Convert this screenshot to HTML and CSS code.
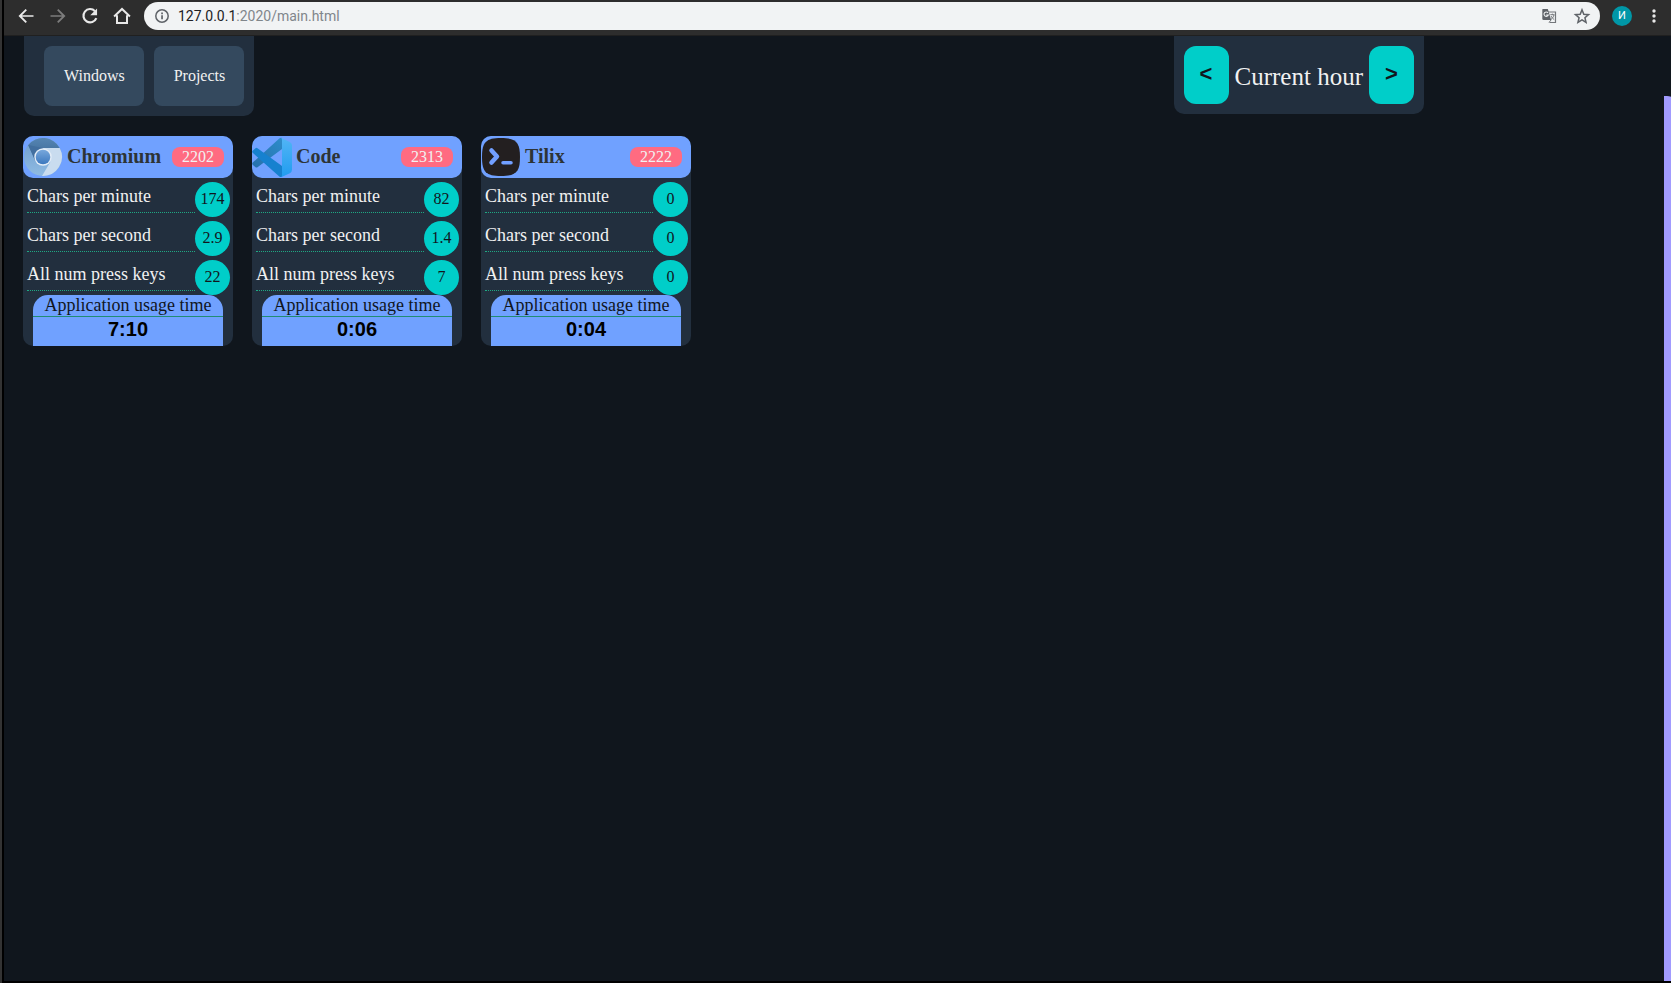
FILE: index.html
```
<!DOCTYPE html>
<html lang="en">
<head>
<meta charset="utf-8">
<title>Key statistics</title>
<link rel="stylesheet" href="styles.css">
</head>
<body>
<header class="browser">
  <button class="tool" aria-label="Back"><svg viewBox="0 0 24 24" width="20" height="20"><path d="M21 11H7.200l5.900-5.900L11.500 3.500 3 12l8.500 8.500 1.600-1.600L7.200 13H21z" fill="#e8e8e8"/></svg></button>
  <button class="tool" aria-label="Forward"><svg viewBox="0 0 24 24" width="20" height="20"><path d="M3 11h13.800l-5.900-5.900 1.600-1.600L21 12l-8.500 8.500-1.600-1.600 5.900-5.900H3z" fill="#7c7c7c"/></svg></button>
  <button class="tool" aria-label="Reload"><svg viewBox="0 0 24 24" width="20" height="20"><path d="M18 6.200A8 8 0 1 0 19.600 14.500" fill="none" stroke="#e8e8e8" stroke-width="2.600"/><path d="M20.500 3v8.200h-8.200z" fill="#e8e8e8"/></svg></button>
  <button class="tool" aria-label="Home"><svg viewBox="0 0 24 24" width="20" height="20"><path d="M2.500 12.500 12 3.500l9.500 9M6 11v9.300h12V11" fill="none" stroke="#e8e8e8" stroke-width="2.400"/></svg></button>
  <div class="address">
    <svg viewBox="0 0 16 16" width="16" height="16"><circle cx="8" cy="8" r="6.200" fill="none" stroke="#5f6368" stroke-width="1.500"/><path d="M7.200 7.200h1.700v4H7.200zM7.200 4.600h1.700v1.600H7.200z" fill="#5f6368"/></svg>
    <span class="url"><span class="host">127.0.0.1</span>:2020/main.html</span>
    <button class="tool" aria-label="Translate"><svg viewBox="0 0 16 16" width="16" height="16"><path d="M7 4h7.500v10.500H8.500" fill="none" stroke="#74777b" stroke-width="1.200"/><path d="M1.500 1h5.300l3.400 11H2.500a1.200 1.200 0 0 1-1.200-1.200V2z" fill="#5f6368"/><path d="M7 4.800A2.200 2.200 0 1 0 7.300 7H5.200" fill="none" stroke="#f1f3f4" stroke-width="1.100"/><path d="M9.300 6.700h4.200M11.400 5.700v1M13 6.900c-.5 2-1.500 3.300-3 4.600M10 8c.8 1.500 1.700 2.600 3.200 3.600M8 14.500l2-2.500" fill="none" stroke="#74777b" stroke-width="1"/></svg></button>
    <button class="tool" aria-label="Bookmark"><svg viewBox="0 0 24 24" width="18" height="18"><path d="m12 3.800 2.400 5.900 6.300.5-4.800 4.100 1.500 6.200-5.400-3.300-5.400 3.300 1.500-6.200-4.800-4.100 6.300-.5z" fill="none" stroke="#5f6368" stroke-width="2"/></svg></button>
  </div>
  <button class="avatar" aria-label="Profile">И</button>
  <button class="tool menu" aria-label="Menu"><svg viewBox="0 0 4 16" width="4" height="16"><circle cx="2" cy="3" r="1.700" fill="#e8e8e8"/><circle cx="2" cy="8" r="1.700" fill="#e8e8e8"/><circle cx="2" cy="13" r="1.700" fill="#e8e8e8"/></svg></button>
</header>
<main class="page">
  <div class="topbar">
    <nav class="tabs">
      <button class="tab">Windows</button>
      <button class="tab">Projects</button>
    </nav>
    <div class="period">
      <button class="step" aria-label="Previous">&lt;</button>
      <span class="period-name">Current hour</span>
      <button class="step" aria-label="Next">&gt;</button>
    </div>
  </div>
  <section class="cards">
    <article class="card">
      <header class="card-head">
        <svg viewBox="0 0 40 40" width="40" height="40"><defs><linearGradient id="cb" x1="0" y1="0" x2="0" y2="1"><stop offset="0" stop-color="#5585b2"/><stop offset="1" stop-color="#3b6795"/></linearGradient><linearGradient id="cl" x1="0" y1="0" x2="0" y2="1"><stop offset="0" stop-color="#6f9dcc"/><stop offset="1" stop-color="#8fbbe3"/></linearGradient><linearGradient id="cc" x1="0" y1="0" x2="0" y2="1"><stop offset="0" stop-color="#78a8dc"/><stop offset="1" stop-color="#3c78be"/></linearGradient></defs>
          <circle cx="20" cy="20" r="19" fill="url(#cl)"/>
          <path d="M20 11h16.700A19 19 0 0 1 19 38.900l8.300-14z" fill="#c9dcef"/>
          <path d="M20 11h16.700A19 19 0 0 0 5.200 8.100L12.300 23 20 11z" fill="url(#cb)"/>
          <path d="M5.200 8.100 12.200 24 20 11z" fill="#426f9f"/>
          <circle cx="20" cy="20" r="8.700" fill="#e4edf7"/><circle cx="20" cy="20" r="7.300" fill="url(#cc)"/></svg>
        <h2 class="app">Chromium</h2><span class="badge">2202</span>
      </header>
      <dl class="stats">
        <div class="stat"><dt>Chars per minute</dt><dd>174</dd></div>
        <div class="stat"><dt>Chars per second</dt><dd>2.9</dd></div>
        <div class="stat"><dt>All num press keys</dt><dd>22</dd></div>
      </dl>
      <div class="usage"><p class="usage-label">Application usage time</p><p class="usage-time">7:10</p></div>
    </article>
    <article class="card">
      <header class="card-head">
        <svg viewBox="0 0 40 40" width="40" height="40"><defs><linearGradient id="vr" x1="0" y1="0" x2="0" y2="1"><stop offset="0" stop-color="#51b5f5"/><stop offset="1" stop-color="#219cf0"/></linearGradient><linearGradient id="vd" x1="0" y1="1" x2="1" y2="0"><stop offset="0" stop-color="#2570ab"/><stop offset="1" stop-color="#2e8cca"/></linearGradient></defs>
          <path d="M30 1v11L5.500 30.200Q4.500 31 3.500 30.200L.7 27.700Q-.3 26.600.7 25.600L27 1.800Q28.500.5 30 1z" fill="url(#vd)"/>
          <path d="M30 40V29L5.500 11.200Q4.500 10.500 3.500 11.200L.7 13.700Q-.3 14.800.7 15.800L27 39.200Q28.500 40.600 30 40z" fill="#1681cf"/>
          <path d="M29 .8 37.800 4.900Q40 6 40 8.300v24.500q0 2.300-2.200 3.400L29 40.300q1-.8 1-2.300V3q0-1.500-1-2.200z" fill="url(#vr)"/></svg>
        <h2 class="app">Code</h2><span class="badge">2313</span>
      </header>
      <dl class="stats">
        <div class="stat"><dt>Chars per minute</dt><dd>82</dd></div>
        <div class="stat"><dt>Chars per second</dt><dd>1.4</dd></div>
        <div class="stat"><dt>All num press keys</dt><dd>7</dd></div>
      </dl>
      <div class="usage"><p class="usage-label">Application usage time</p><p class="usage-time">0:06</p></div>
    </article>
    <article class="card">
      <header class="card-head">
        <svg viewBox="0 0 40 40" width="40" height="40"><path d="M20 1C35 1 39 5 39 20S35 39 20 39 1 35 1 20 5 1 20 1z" fill="#231f20"/><path d="M10.500 13.500 16 19.500 10.500 25.500" fill="none" stroke="#729fff" stroke-width="4.500" stroke-linecap="round" stroke-linejoin="round"/><path d="M22 25.800h8" fill="none" stroke="#729fff" stroke-width="3.500" stroke-linecap="round"/></svg>
        <h2 class="app">Tilix</h2><span class="badge">2222</span>
      </header>
      <dl class="stats">
        <div class="stat"><dt>Chars per minute</dt><dd>0</dd></div>
        <div class="stat"><dt>Chars per second</dt><dd>0</dd></div>
        <div class="stat"><dt>All num press keys</dt><dd>0</dd></div>
      </dl>
      <div class="usage"><p class="usage-label">Application usage time</p><p class="usage-time">0:04</p></div>
    </article>
  </section>
  <aside class="drawer" aria-label="Side panel"></aside>
</main>
</body>
</html>
```
FILE: styles.css
```
* { box-sizing: border-box; }
body {
  margin: 0;
  min-height: 100vh;
  display: flex;
  flex-direction: column;
  border-left: 4px solid #000;
  border-bottom: 2px solid #000;
  background: #10161d;
  color: #f1f1f1;
  font-family: "Liberation Serif", serif;
  font-size: 16px;
}
body::before {
  content: "";
  position: absolute;
  left: 0;
  top: 0;
  bottom: 0;
  width: 2px;
  background: #333;
}
button {
  margin: 0;
  padding: 0;
  border: 0;
  background: none;
  color: inherit;
  font: inherit;
}
svg { display: block; flex: none; }
.browser {
  height: 36px;
  padding: 2px 15px 5px 12px;
  display: flex;
  align-items: center;
  gap: 12px;
  background: #2d2d2d;
  border-bottom: 1px solid #202020;
}
.tool { display: flex; }
.browser > .tool:not(.menu) { width: 20px; }
.address {
  flex: 1;
  height: 28px;
  padding: 0 9px 0 10px;
  display: flex;
  align-items: center;
  gap: 16px;
  border-radius: 14px;
  background: #f1f3f4;
  font-family: Roboto, sans-serif;
  font-size: 14px;
  color: #80868b;
}
.url { flex: 1; margin-left: -8px; }
.host { color: #202124; }
.avatar {
  width: 20px;
  height: 20px;
  border-radius: 50%;
  background: #0097a7;
  color: #fff;
  font: 11px/20px Roboto, sans-serif;
}
.menu { margin-left: 8px; }
.page {
  flex: 1;
  position: relative;
  overflow: hidden;
}
.topbar {
  display: flex;
  justify-content: space-between;
  align-items: flex-start;
  padding: 0 247px 0 20px;
}
.tabs {
  display: flex;
  gap: 10px;
  padding: 10px 10px 10px 20px;
  border-radius: 0 0 10px 10px;
  background: #222f3e;
}
.tab {
  height: 60px;
  padding: 0 19px 0 20px;
  border-radius: 8px;
  background: #34495e;
}
.period {
  display: flex;
  align-items: center;
  gap: 6px;
  padding: 10px;
  border-radius: 0 0 10px 10px;
  background: #222f3e;
}
.step {
  width: 45px;
  height: 58px;
  padding-bottom: 2px;
  border-radius: 12px;
  background: #00cec9;
  color: #10161d;
  font: bold 22px "Liberation Sans", sans-serif;
}
.period-name { font-size: 25px; padding-top: 4px; }
.cards {
  display: flex;
  flex-wrap: wrap;
  gap: 19px;
  padding: 20px 19px;
}
.card {
  width: 210px;
  border-radius: 10px;
  background: #222f3e;
}
.card-head {
  height: 42px;
  padding-right: 9px;
  display: flex;
  align-items: center;
  gap: 4px;
  border-radius: 10px;
  background: #70a1ff;
}
.app {
  flex: 1;
  margin: 0;
  font-size: 20px;
  line-height: 22px;
  padding-bottom: 2px;
  color: #2d3436;
}
.badge {
  padding: 0 10px;
  border-radius: 8px;
  background: #ff6b81;
  line-height: 20px;
}
.stats {
  margin: 0;
  padding: 4px 3px 0 4px;
  display: flex;
  flex-direction: column;
  gap: 4px;
}
.stat { display: flex; align-items: flex-start; }
.stat dt {
  flex: 1;
  height: 31px;
  border-bottom: 1px dotted #1fa883;
  font-size: 18px;
  line-height: 28px;
}
.stat dd {
  width: 35px;
  height: 35px;
  margin: 0;
  border-radius: 50%;
  background: #00cec9;
  color: #10161d;
  line-height: 33px;
  text-align: center;
}
.usage {
  margin: 0 10px;
  border-radius: 15px 15px 0 0;
  background: #70a1ff;
  text-align: center;
}
.usage p { margin: 0; }
.usage-label {
  border-bottom: 1px solid #218c74;
  color: #10161d;
  font-size: 18px;
  line-height: 21px;
}
.usage-time {
  height: 29px;
  color: #000;
  font: bold 20px/25px "Liberation Sans", sans-serif;
}
.drawer {
  position: absolute;
  top: 60px;
  bottom: 0;
  right: -6px;
  width: 13px;
  border-top-right-radius: 10px;
  background: #a29bfe;
}
```
